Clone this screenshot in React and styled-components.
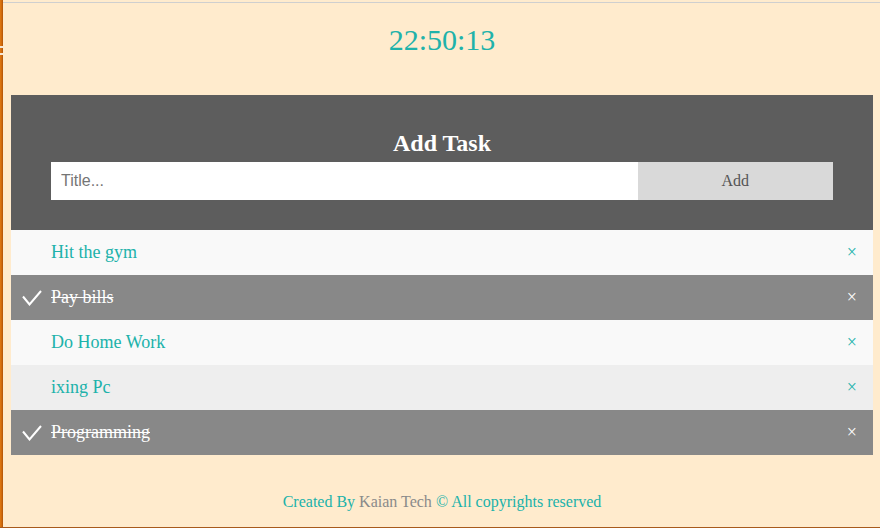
import React from "react";
import styled, { createGlobalStyle } from "styled-components";

const Global = createGlobalStyle`
  html, body { margin: 0; padding: 0; }
  body {
    font-family: "Liberation Serif", "Times New Roman", serif;
    background: #ffebcd;
  }
  * { box-sizing: border-box; }
`;

const Frame = styled.div`
  display: flex;
  height: 528px;
  background: #ffebcd;
  border-bottom: 1px solid #a85a1c;
`;

const LeftEdge = styled.div`
  width: 3px;
  flex: none;
  background:
    linear-gradient(to bottom,
      transparent 0, transparent 46px,
      #f3e6d8 46px, #f3e6d8 48px,
      transparent 48px, transparent 53px,
      #f3e6d8 53px, #f3e6d8 55px,
      transparent 55px),
    linear-gradient(to right, #e07a12, #c9640c 70%, #a85008);
`;

const Main = styled.div`
  flex: 1;
  display: flex;
  flex-direction: column;
  padding-top: 2px;
`;

const TopRule = styled.div`
  height: 1px;
  background: #cfcfcf;
`;

const Clock = styled.div`
  margin-top: 20px;
  text-align: center;
  font-size: 30px;
  line-height: 34px;
  color: #20b2aa;
  margin-left: 1px;
`;

const Panel = styled.div`
  margin: 38px 7px 0 8px;
`;

const Header = styled.div`
  background: #5d5d5d;
  padding: 30px 40px;
  text-align: center;
  color: #fff;
`;

const Title = styled.h2`
  margin: 5px;
  font-size: 24px;
  font-weight: bold;
`;

const Form = styled.div`
  display: flex;
`;

const Input = styled.input`
  width: 75%;
  border: none;
  border-radius: 0;
  padding: 10px;
  font-size: 16px;
  font-family: "Liberation Sans", Arial, sans-serif;
  line-height: normal;
  height: 38px;
  outline: none;
  background: #fff;
  &::placeholder { color: #757575; }
`;

const AddBtn = styled.span`
  width: 25%;
  padding: 10px;
  height: 38px;
  background: #d9d9d9;
  color: #555;
  text-align: center;
  font-size: 16px;
  line-height: 18px;
`;

const List = styled.ul`
  margin: 0;
  padding: 0;
  list-style: none;
`;

const Item = styled.li`
  display: flex;
  align-items: center;
  height: 45px;
  font-size: 18px;
  background: ${(p) => (p.$checked ? "#888" : p.$odd ? "#f9f9f9" : "#eee")};
  color: ${(p) => (p.$checked ? "#fff" : "#20b2aa")};
`;

const Mark = styled.span`
  width: 40px;
  flex: none;
  display: flex;
  align-items: center;
  padding-left: 11px;
`;

const Label = styled.span`
  flex: 1;
  text-decoration: ${(p) => (p.$checked ? "line-through" : "none")};
`;

const Close = styled.span`
  padding: 0 16px;
  font-size: 18px;
`;

const Footer = styled.div`
  margin-top: 38px;
  text-align: center;
  font-size: 16px;
  color: #20b2aa;
  margin-left: 1px;
`;

const Brand = styled.span`
  color: #8a8a8a;
`;

const tasks = [
  { title: "Hit the gym", checked: false },
  { title: "Pay bills", checked: true },
  { title: "Do Home Work", checked: false },
  { title: "ixing Pc", checked: false },
  { title: "Programming", checked: true },
];

const Check = () => (
  <svg width="20" height="16" viewBox="0 0 20 16">
    <polyline points="1,6.5 7.5,14.5 19,1" fill="none" stroke="#fff" strokeWidth="2" />
  </svg>
);

export default function App() {
  return (
    <>
      <Global />
      <Frame>
        <LeftEdge />
        <Main>
          <TopRule />
          <Clock>22:50:13</Clock>
          <Panel>
            <Header>
              <Title>Add Task</Title>
              <Form>
                <Input placeholder="Title..." />
                <AddBtn>Add</AddBtn>
              </Form>
            </Header>
            <List>
              {tasks.map((t, i) => (
                <Item key={t.title} $checked={t.checked} $odd={i % 2 === 0}>
                  <Mark>{t.checked && <Check />}</Mark>
                  <Label $checked={t.checked}>{t.title}</Label>
                  <Close>×</Close>
                </Item>
              ))}
            </List>
          </Panel>
          <Footer>
            Created By <Brand>Kaian Tech</Brand> © All copyrights reserved
          </Footer>
        </Main>
      </Frame>
    </>
  );
}
